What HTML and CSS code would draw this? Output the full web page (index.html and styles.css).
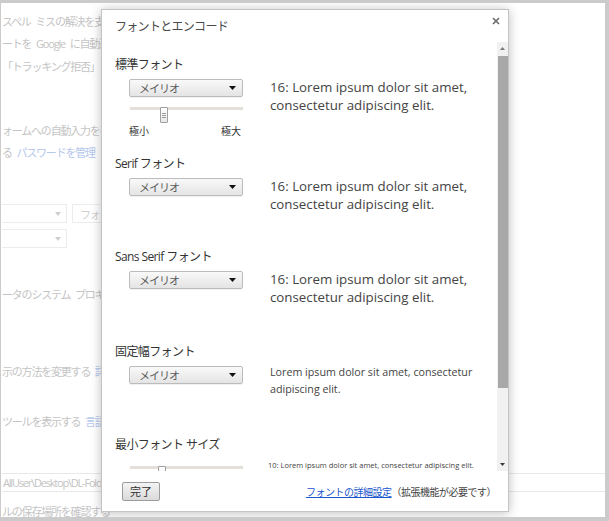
FILE: index.html
```html
<!DOCTYPE html>
<html lang="ja">
<head>
<meta charset="utf-8">
<title>フォントとエンコード</title>
<link rel="stylesheet" href="styles.css">
</head>
<body>
<div class="screen">
  <div class="page">
    <div class="pline">スペル ミスの解決を支</div>
    <div class="pline gap-2">ートを Google に自動送</div>
    <div class="pline gap-3">「トラッキング拒否」リ</div>
    <div class="pline gap-44">ォームへの自動入力を有</div>
    <div class="pline gap-2">る <span class="plink">パスワードを管理</span></div>
    <div class="prow gap-41">
      <div class="pselect"><span class="parrow"></span></div>
      <div class="pselect pselect-wide">フォン</div>
    </div>
    <div class="prow gap-6">
      <div class="pselect"><span class="parrow"></span></div>
    </div>
    <div class="pline gap-37">ータのシステム プロキシ</div>
    <div class="pline gap-57">示の方法を変更する <span class="plink">詳細</span></div>
    <div class="pline gap-30">ツールを表示する <span class="plink">言語</span></div>
    <div class="pinput gap-41">AllUser\Desktop\DL-Folder</div>
    <div class="pline gap-10">ルの保存場所を確認する</div>
  </div>

  <div class="dialog">
    <div class="dlg-header">
      <span class="dlg-title">フォントとエンコード</span>
      <svg class="dlg-close" width="8" height="8" viewBox="0 0 8 8"><path d="M1 1L7 7M7 1L1 7" stroke="#6a6a6a" stroke-width="1.6" fill="none"/></svg>
    </div>
    <div class="dlg-body">
      <div class="dlg-scroll">
        <div class="section s1">
          <div class="sec-title">標準フォント</div>
          <div class="sec-row">
            <div class="controls">
              <div class="select"><span>メイリオ</span><svg width="7" height="4" viewBox="0 0 7 4"><path d="M0 0H7L3.5 4Z" fill="#111"/></svg></div>
              <div class="slider slider-top">
                <div class="slider-track"></div>
                <div class="slider-thumb"><svg width="4" height="5" viewBox="0 0 4 5"><path d="M0 0.5H4M0 2.5H4M0 4.5H4" stroke="#9a9a9a" stroke-width="1"/></svg></div>
              </div>
              <div class="slider-labels"><span>極小</span><span>極大</span></div>
            </div>
            <div class="preview">16: Lorem ipsum dolor sit amet,<br>consectetur adipiscing elit.</div>
          </div>
        </div>

        <div class="section">
          <div class="sec-title">Serif フォント</div>
          <div class="sec-row">
            <div class="controls">
              <div class="select"><span>メイリオ</span><svg width="7" height="4" viewBox="0 0 7 4"><path d="M0 0H7L3.5 4Z" fill="#111"/></svg></div>
            </div>
            <div class="preview">16: Lorem ipsum dolor sit amet,<br>consectetur adipiscing elit.</div>
          </div>
        </div>

        <div class="section s3">
          <div class="sec-title">Sans Serif フォント</div>
          <div class="sec-row">
            <div class="controls">
              <div class="select"><span>メイリオ</span><svg width="7" height="4" viewBox="0 0 7 4"><path d="M0 0H7L3.5 4Z" fill="#111"/></svg></div>
            </div>
            <div class="preview">16: Lorem ipsum dolor sit amet,<br>consectetur adipiscing elit.</div>
          </div>
        </div>

        <div class="section">
          <div class="sec-title">固定幅フォント</div>
          <div class="sec-row">
            <div class="controls">
              <div class="select"><span>メイリオ</span><svg width="7" height="4" viewBox="0 0 7 4"><path d="M0 0H7L3.5 4Z" fill="#111"/></svg></div>
            </div>
            <div class="preview preview-mono">Lorem ipsum dolor sit amet, consectetur<br>adipiscing elit.</div>
          </div>
        </div>

        <div class="section">
          <div class="sec-title">最小フォント サイズ</div>
          <div class="sec-row">
            <div class="controls">
              <div class="slider">
                <div class="slider-track"></div>
                <div class="slider-thumb thumb-min"><svg width="4" height="5" viewBox="0 0 4 5"><path d="M0 0.5H4M0 2.5H4M0 4.5H4" stroke="#9a9a9a" stroke-width="1"/></svg></div>
              </div>
            </div>
            <div class="preview preview-small">10: Lorem ipsum dolor sit amet, consectetur adipiscing elit.</div>
          </div>
        </div>
      </div>
      <div class="scrollbar">
        <div class="sb-btn"><svg width="5" height="3" viewBox="0 0 5 3"><path d="M0 3H5L2.5 0Z" fill="#7a7a7a"/></svg></div>
        <div class="sb-track"><div class="sb-thumb"></div></div>
        <div class="sb-btn"><svg width="5" height="3" viewBox="0 0 5 3"><path d="M0 0H5L2.5 3Z" fill="#3a3a3a"/></svg></div>
      </div>
    </div>
    <div class="dlg-footer">
      <button class="btn">完了</button>
      <div class="footer-note"><a class="link" href="#">フォントの詳細設定</a>（拡張機能が必要です）</div>
    </div>
  </div>
</div>
</body>
</html>
```

FILE: styles.css
```css
body {
  margin: 0;
  background: #fff;
}

.screen {
  position: relative;
  width: 609px;
  height: 521px;
  box-sizing: border-box;
  border-style: solid;
  border-color: #cbcbcb;
  border-width: 3px 4px 4px 1px;
  overflow: hidden;
  background: #fff;
  font-family: "Noto Sans CJK JP", "Noto Sans", sans-serif;
}

/* faded background settings page (only the strip left of the dialog shows) */
.page {
  padding: 9px 0 0 1px;
  font-family: "Open Sans", "Noto Sans CJK JP", sans-serif;
  font-size: 11px;
  letter-spacing: -1.2px;
  word-spacing: 3px;
  color: #c4c4c4;
}

.pline {
  height: 20px;
  line-height: 20px;
  white-space: nowrap;
}

.plink {
  color: #b5c8ec;
}

.prow {
  display: flex;
  gap: 5px;
  height: 19px;
}

.pselect {
  flex: none;
  width: 65px;
  height: 19px;
  box-sizing: border-box;
  border: 1px solid #ececec;
  border-left: none;
  display: flex;
  align-items: center;
  justify-content: flex-end;
  padding-right: 5px;
}

.pselect-wide {
  width: 45px;
  justify-content: flex-start;
  padding-left: 7px;
  border-left: 1px solid #ececec;
  color: #cfcfcf;
  white-space: nowrap;
}

.parrow {
  width: 0;
  height: 0;
  border-left: 3.5px solid transparent;
  border-right: 3.5px solid transparent;
  border-top: 4px solid #cfcfcf;
}

.pinput {
  height: 19px;
  line-height: 18px;
  box-sizing: border-box;
  border-top: 1px solid #e8e8e8;
  border-bottom: 1px solid #e8e8e8;
  padding-left: 1px;
  white-space: nowrap;
}

.gap-2 { margin-top: 2px; }
.gap-3 { margin-top: 3px; }
.gap-6 { margin-top: 6px; }
.gap-10 { margin-top: 10px; }
.gap-30 { margin-top: 30px; }
.gap-37 { margin-top: 37px; }
.gap-41 { margin-top: 41px; }
.gap-44 { margin-top: 44px; }
.gap-57 { margin-top: 57px; }

/* dialog */
.dialog {
  position: absolute;
  left: 100px;
  top: 6px;
  width: 408px;
  height: 503px;
  box-sizing: border-box;
  border: 1px solid #c4c4c4;
  background: #fff;
  box-shadow: 0 1px 10px rgba(0, 0, 0, 0.26);
  display: flex;
  flex-direction: column;
}

.dlg-header {
  position: relative;
  height: 32px;
  padding-left: 13px;
}

.dlg-title {
  font-size: 12px;
  line-height: 32px;
  letter-spacing: -0.7px;
  color: #4a4a4a;
}

.dlg-close {
  position: absolute;
  right: 8px;
  top: 7px;
}

.dlg-body {
  display: flex;
  height: 429px;
}

.dlg-scroll {
  flex: 1;
  overflow: hidden;
  padding: 15px 0 0 13px;
}

.section {
  height: 93px;
}

.section.s1 { height: 99px; }
.section.s3 { height: 95px; }

.sec-title {
  font-family: "Open Sans", "Noto Sans CJK JP", sans-serif;
  font-size: 12px;
  line-height: 16px;
  letter-spacing: -0.6px;
  color: #333;
  white-space: nowrap;
}

.sec-row {
  display: flex;
  margin-top: 6px;
}

.controls {
  margin-left: 14px;
  width: 114px;
  flex: none;
}

.select {
  height: 18px;
  box-sizing: border-box;
  border: 1px solid #bcbcbc;
  border-radius: 2px;
  background: linear-gradient(#f9f9f9, #e4e4e4);
  box-shadow: 0 1px 0 rgba(0, 0, 0, 0.06);
  display: flex;
  align-items: center;
  justify-content: space-between;
  padding: 0 6px 0 9px;
  font-size: 11px;
  letter-spacing: -1px;
  color: #5a5a5a;
}

.slider {
  position: relative;
  height: 16px;
}

.slider-top {
  margin-top: 10px;
}

.slider-track {
  margin: 7px 0 0 1px;
  height: 3px;
  background: #e4dfd9;
}

.slider-thumb {
  position: absolute;
  left: 31px;
  top: 0;
  width: 6px;
  height: 14px;
  border: 1px solid #a0a0a0;
  border-radius: 1px;
  background: linear-gradient(#fff, #e8e8e8);
  display: flex;
  align-items: center;
  justify-content: center;
}

.slider-thumb.thumb-min {
  left: 29px;
}

.slider-labels {
  display: flex;
  justify-content: space-between;
  padding-right: 2px;
  font-size: 10px;
  line-height: 16px;
  color: #333;
}

.preview {
  margin: -1px 0 0 27px;
  font-family: "Open Sans", "Noto Sans", sans-serif;
  font-size: 13.3px;
  line-height: 18px;
  color: #444;
  white-space: nowrap;
}

.preview-mono {
  margin-top: -2px;
  font-size: 10.7px;
  line-height: 17px;
}

.preview-small {
  margin: 1px 0 0 25px;
  font-size: 7.5px;
  line-height: 10px;
}

.scrollbar {
  width: 11px;
  background: #f1f1f1;
  display: flex;
  flex-direction: column;
}

.sb-btn {
  height: 13px;
  display: flex;
  align-items: center;
  justify-content: center;
}

.sb-track {
  flex: 1;
  padding: 1px 0 0 1px;
}

.sb-thumb {
  width: 10px;
  height: 332px;
  background: #a8a8a8;
}

.dlg-footer {
  flex: 1;
  display: flex;
  align-items: center;
  justify-content: space-between;
  padding: 0 12px 0 20px;
}

.btn {
  width: 38px;
  height: 19px;
  padding: 0;
  border: 1px solid #9c9c9c;
  border-radius: 2px;
  background: linear-gradient(#f4f4f4, #dadada);
  font-family: "Noto Sans CJK JP", sans-serif;
  font-size: 11px;
  color: #333;
  line-height: 17px;
}

.footer-note {
  font-size: 10px;
  letter-spacing: -0.5px;
  color: #444;
  white-space: nowrap;
}

.link {
  color: #1a56cc;
  text-decoration: underline;
}
```
